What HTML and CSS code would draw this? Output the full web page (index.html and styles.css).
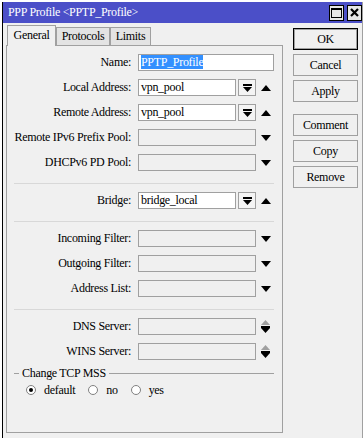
FILE: index.html
```html
<!DOCTYPE html>
<html lang="en">
<head>
    <meta charset="UTF-8">
    <title>PPP Profile &lt;PPTP_Profile&gt;</title>
    <link rel="stylesheet" href="styles.css">
</head>
<body>
    <div class="window">
        <div class="titlebar">
            <span class="title">PPP Profile &lt;PPTP_Profile&gt;</span>
            <div class="title-btns">
                <span class="tbtn">
                    <svg width="11" height="10" viewBox="0 0 11 10"><rect x="0.5" y="0.5" width="10" height="9" fill="none" stroke="#000"/><rect x="0" y="0" width="11" height="2" fill="#000"/></svg>
                </span>
                <span class="tbtn">
                    <svg width="9" height="9" viewBox="0 0 9 9"><path d="M1 1 L8 8 M8 1 L1 8" stroke="#000" stroke-width="2.2"/></svg>
                </span>
            </div>
        </div>

        <div class="client">
            <div class="tabs-area">
                <div class="tabs">
                    <div class="tab tab-general active">General</div>
                    <div class="tab tab-protocols">Protocols</div>
                    <div class="tab tab-limits">Limits</div>
                </div>

                <div class="panel">
                    <div class="row">
                        <label class="lbl">Name:</label>
                        <div class="field field-full"><span class="selected">PPTP_Profile</span></div>
                    </div>
                    <div class="row">
                        <label class="lbl">Local Address:</label>
                        <div class="field field-short">vpn_pool</div>
                        <span class="dd-btn"><svg width="9" height="8" viewBox="0 0 9 8"><rect x="0" y="0" width="9" height="2" fill="#000"/><path d="M0 3 H9 L4.5 8 Z" fill="#000"/></svg></span>
                        <span class="arrow"><svg width="10" height="6" viewBox="0 0 10 6"><path d="M0 6 H10 L5 0 Z" fill="#000"/></svg></span>
                    </div>
                    <div class="row">
                        <label class="lbl">Remote Address:</label>
                        <div class="field field-short">vpn_pool</div>
                        <span class="dd-btn"><svg width="9" height="8" viewBox="0 0 9 8"><rect x="0" y="0" width="9" height="2" fill="#000"/><path d="M0 3 H9 L4.5 8 Z" fill="#000"/></svg></span>
                        <span class="arrow"><svg width="10" height="6" viewBox="0 0 10 6"><path d="M0 6 H10 L5 0 Z" fill="#000"/></svg></span>
                    </div>
                    <div class="row">
                        <label class="lbl">Remote IPv6 Prefix Pool:</label>
                        <div class="field field-mid empty"></div>
                        <span class="arrow"><svg width="10" height="6" viewBox="0 0 10 6"><path d="M0 0 H10 L5 6 Z" fill="#000"/></svg></span>
                    </div>
                    <div class="row">
                        <label class="lbl">DHCPv6 PD Pool:</label>
                        <div class="field field-mid empty"></div>
                        <span class="arrow"><svg width="10" height="6" viewBox="0 0 10 6"><path d="M0 0 H10 L5 6 Z" fill="#000"/></svg></span>
                    </div>

                    <div class="sep"></div>

                    <div class="row">
                        <label class="lbl">Bridge:</label>
                        <div class="field field-short">bridge_local</div>
                        <span class="dd-btn"><svg width="9" height="8" viewBox="0 0 9 8"><rect x="0" y="0" width="9" height="2" fill="#000"/><path d="M0 3 H9 L4.5 8 Z" fill="#000"/></svg></span>
                        <span class="arrow"><svg width="10" height="6" viewBox="0 0 10 6"><path d="M0 6 H10 L5 0 Z" fill="#000"/></svg></span>
                    </div>

                    <div class="sep"></div>

                    <div class="row">
                        <label class="lbl">Incoming Filter:</label>
                        <div class="field field-mid empty"></div>
                        <span class="arrow"><svg width="10" height="6" viewBox="0 0 10 6"><path d="M0 0 H10 L5 6 Z" fill="#000"/></svg></span>
                    </div>
                    <div class="row">
                        <label class="lbl">Outgoing Filter:</label>
                        <div class="field field-mid empty"></div>
                        <span class="arrow"><svg width="10" height="6" viewBox="0 0 10 6"><path d="M0 0 H10 L5 6 Z" fill="#000"/></svg></span>
                    </div>
                    <div class="row">
                        <label class="lbl">Address List:</label>
                        <div class="field field-mid empty"></div>
                        <span class="arrow"><svg width="10" height="6" viewBox="0 0 10 6"><path d="M0 0 H10 L5 6 Z" fill="#000"/></svg></span>
                    </div>

                    <div class="sep"></div>

                    <div class="row">
                        <label class="lbl">DNS Server:</label>
                        <div class="field field-mid empty"></div>
                        <span class="arrow"><svg width="9" height="13" viewBox="0 0 9 13"><path d="M0 5 H9 L4.5 0 Z" fill="#a0a0a0"/><rect x="0" y="6" width="9" height="2" fill="#000"/><path d="M0 8 H9 L4.5 13 Z" fill="#000"/></svg></span>
                    </div>
                    <div class="row">
                        <label class="lbl">WINS Server:</label>
                        <div class="field field-mid empty"></div>
                        <span class="arrow"><svg width="9" height="13" viewBox="0 0 9 13"><path d="M0 5 H9 L4.5 0 Z" fill="#a0a0a0"/><rect x="0" y="6" width="9" height="2" fill="#000"/><path d="M0 8 H9 L4.5 13 Z" fill="#000"/></svg></span>
                    </div>

                    <div class="group">
                        <div class="group-head">
                            <span class="group-dash"></span>
                            <span class="group-title">Change TCP MSS</span>
                            <span class="group-line"></span>
                        </div>
                        <div class="radios">
                            <span class="radio checked"></span><span class="radio-lbl">default</span>
                            <span class="radio"></span><span class="radio-lbl">no</span>
                            <span class="radio"></span><span class="radio-lbl">yes</span>
                        </div>
                    </div>
                </div>
            </div>

            <div class="buttons">
                <div class="btn btn-default">OK</div>
                <div class="btn">Cancel</div>
                <div class="btn">Apply</div>
                <div class="btn btn-gap">Comment</div>
                <div class="btn">Copy</div>
                <div class="btn">Remove</div>
            </div>
        </div>
    </div>
</body>
</html>
```

FILE: styles.css
```css
body {
    margin: 0;
    padding: 2px 0 0 2px;
    background: #fff;
    font-family: 'Liberation Serif', 'Times New Roman', serif;
    font-size: 12px;
    letter-spacing: -0.3px;
    color: #000;
}
.window {
    width: 361px;
    height: 436px;
    box-sizing: border-box;
    border-left: 1px solid #000;
    border-right: 1px solid #a0a0a0;
    background: #f0f0f0;
    overflow: hidden;
}
.titlebar {
    height: 21px;
    background: #4b4fc8;
    color: #fff;
    display: flex;
    align-items: center;
    justify-content: space-between;
    padding-left: 5px;
}
.title {
    font-size: 12px;
}
.title-btns {
    display: flex;
    gap: 3px;
}
.tbtn {
    width: 15px;
    height: 16px;
    box-sizing: border-box;
    border: 1px solid #000;
    background: #e6e6e6;
    display: flex;
    align-items: center;
    justify-content: center;
}
.client {
    display: flex;
}
.tabs-area {
    margin-left: 3px;
    padding-top: 2px;
}
.tabs {
    display: flex;
    align-items: flex-end;
    height: 20px;
    padding-left: 1px;
}
.tab {
    height: 18px;
    box-sizing: border-box;
    border: 1px solid #a0a0a0;
    border-bottom: none;
    background: #e3e3e3;
    text-align: center;
    line-height: 17px;
}
.tab.active {
    height: 21px;
    margin-bottom: -1px;
    background: #f0f0f0;
    position: relative;
    z-index: 1;
    line-height: 18px;
}
.tab-general { width: 49px; }
.tab-protocols { width: 54px; }
.tab-limits { width: 41px; }

.panel {
    width: 277px;
    height: 388px;
    box-sizing: border-box;
    border: 1px solid #a0a0a0;
    padding-top: 8px;
}
.row {
    display: flex;
    align-items: center;
    height: 17px;
    margin-bottom: 8px;
}
.lbl {
    width: 124px;
    text-align: right;
    margin-right: 7px;
    white-space: nowrap;
}
.field {
    height: 17px;
    box-sizing: border-box;
    border: 1px solid #a0a0a0;
    background: #fff;
    padding-left: 2px;
    line-height: 15px;
    white-space: nowrap;
    overflow: hidden;
}
.field.empty {
    background: #f0f0f0;
}
.field-full { width: 136px; }
.field-short { width: 98px; }
.field-mid { width: 118px; }
.selected {
    background: #3390ff;
    color: #fff;
}
.dd-btn {
    width: 18px;
    height: 17px;
    box-sizing: border-box;
    margin-left: 2px;
    border: 1px solid #a0a0a0;
    background: #f4f4f4;
    display: flex;
    align-items: center;
    justify-content: center;
}
.arrow {
    margin-left: 5px;
    display: flex;
    align-items: center;
}
/* margins collapse with the row's 8px */
.sep {
    height: 1px;
    background: #d8d8d8;
    margin: 12px 8px 8px 7px;
}
.group {
    margin: 0 8px 0 7px;
}
.group-head {
    display: flex;
    align-items: center;
    height: 10px;
}
.group-dash {
    width: 5px;
    height: 1px;
    background: #a0a0a0;
}
.group-title {
    padding: 0 3px;
}
.group-line {
    flex: 1;
    height: 1px;
    background: #a0a0a0;
}
.radios {
    display: flex;
    align-items: center;
    height: 14px;
    margin-top: 5px;
    padding-left: 12px;
}
.radio {
    width: 10px;
    height: 10px;
    box-sizing: border-box;
    border-radius: 50%;
    border: 1px solid #808080;
    background: #fff;
    display: flex;
    align-items: center;
    justify-content: center;
}
.radio.checked::after {
    content: '';
    width: 4px;
    height: 4px;
    border-radius: 50%;
    background: #000;
}
.radio-lbl {
    margin: 0 13px 0 8px;
}
.buttons {
    margin-left: 10px;
    padding-top: 5px;
    display: flex;
    flex-direction: column;
    gap: 4px;
}
.btn {
    width: 65px;
    height: 22px;
    box-sizing: border-box;
    border: 1px solid #a0a0a0;
    background: #f0f0f0;
    text-align: center;
    line-height: 20px;
}
.btn-default {
    border: 1px solid #000;
    box-shadow: inset 0 0 0 1px #a0a0a0;
}
.btn-gap {
    margin-top: 8px;
}
```
